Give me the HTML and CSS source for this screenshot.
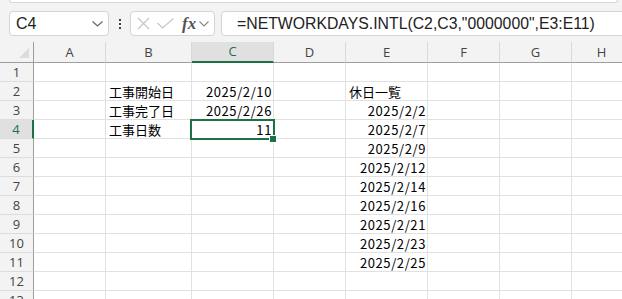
FILE: index.html
```html
<!DOCTYPE html>
<html lang="ja">
<head>
    <meta charset="UTF-8">
    <title>NETWORKDAYS.INTL</title>
    <link rel="stylesheet" href="styles.css">
</head>
<body>
<div id="app">
    <div class="ribbon"></div>
    <div class="toolbar">
        <div class="nameBox">
            <span>C4</span>
            <svg class="chev" width="11" height="6" viewBox="0 0 11 6"><path d="M0.5 0.5 L5.5 5 L10.5 0.5" fill="none" stroke="#666" stroke-width="1.2"/></svg>
        </div>
        <div class="dots"><i></i><i></i><i></i></div>
        <div class="fxBox">
            <svg width="13" height="13" viewBox="0 0 13 13"><path d="M1 1 L12 12 M12 1 L1 12" stroke="#c6c6c6" stroke-width="1.2"/></svg>
            <svg width="17" height="11" viewBox="0 0 17 11"><path d="M0.5 5 L5.5 10 L16.5 0.5" fill="none" stroke="#c6c6c6" stroke-width="1.2"/></svg>
            <span class="fx">fx</span>
            <svg width="10" height="6" viewBox="0 0 10 6"><path d="M0.5 0.5 L5 5 L9.5 0.5" fill="none" stroke="#888" stroke-width="1.1"/></svg>
        </div>
        <div class="formula">=NETWORKDAYS.INTL(C2,C3,"0000000",E3:E11)</div>
    </div>
    <div class="sheet" id="sheet"></div>
</div>
<script>
    // 行ごとのセル内容: [B, C, E]
    var data=[
        ['','',''],
        ['工事開始日','2025/2/10','休日一覧'],
        ['工事完了日','2025/2/26','2025/2/2'],
        ['工事日数','11','2025/2/7'],
        ['','','2025/2/9'],
        ['','','2025/2/12'],
        ['','','2025/2/14'],
        ['','','2025/2/16'],
        ['','','2025/2/21'],
        ['','','2025/2/23'],
        ['','','2025/2/25'],
        ['','',''],
        ['','','']
    ];
    var cols=['A','B','C','D','E','F','G','H'];
    var oSheet=document.getElementById('sheet');
    var str='<div class="corner"><b></b></div>';
    for(var i=0; i<cols.length; i++){
        str+='<div class="colHead'+(cols[i]=='C'?' sel':'')+'">'+cols[i]+'</div>';
    }
    for(var r=0; r<data.length; r++){
        var row=r+1;
        str+='<div class="rowHead'+(row==4?' sel':'')+'">'+row+'</div>';
        str+='<div class="cell"></div>';
        str+='<div class="cell">'+data[r][0]+'</div>';
        str+='<div class="cell num'+(row==4?' active':'')+'">'+data[r][1]+'</div>';
        str+='<div class="cell"></div>';
        //E列: 見出し以外は右寄せ
        str+='<div class="cell'+(row>2?' num':'')+'">'+data[r][2]+'</div>';
        str+='<div class="cell"></div><div class="cell"></div><div class="cell"></div>';
    }
    oSheet.innerHTML=str;
</script>
</body>
</html>
```

FILE: styles.css
```css
*{
    margin:0;
    padding:0;
    box-sizing: border-box;
}
body,html{
    width:622px;
    height:299px;
    overflow: hidden;
    background: #f3f3f3;
}
.ribbon{
    height:3px;
    margin:0 4px 0 9px;
    background: #fff;
    border:1px solid #d6d6d6;
    border-top:0;
    border-radius:0 0 6px 6px;
}
.toolbar{
    height:39px;
    padding:8px 0 0 9px;
    display: flex;
    align-items: flex-start;
}
.nameBox{
    width:100px;
    height:25px;
    background: #fff;
    border:1px solid #d4d4d4;
    border-radius:4px;
    display: flex;
    align-items: center;
    justify-content: space-between;
    padding:0 5px 0 6px;
    font-family: "Liberation Sans", Arial, sans-serif;
    font-size:16px;
    color: #222;
}
.dots{
    width:21px;
    height:25px;
    display: flex;
    flex-direction: column;
    align-items: center;
    justify-content: center;
    gap:2px;
}
.dots i{
    display: block;
    width:2px;
    height:2px;
    background: #444;
}
.fxBox{
    width:85px;
    height:25px;
    background: #fff;
    border:1px solid #d4d4d4;
    border-radius:4px;
    display: flex;
    align-items: center;
    padding:0 0 0 6px;
    gap:7px;
}
.fxBox .fx{
    font-family: "Liberation Serif", "Times New Roman", serif;
    font-style: italic;
    font-weight: bold;
    font-size:17px;
    color: #555;
    margin-left:1px;
    margin-right:-4px;
}
.formula{
    flex:1;
    height:25px;
    margin-left:6px;
    margin-right:-6px;
    background: #fff;
    border:1px solid #d4d4d4;
    border-radius:4px;
    padding-left:15px;
    font-family: "Liberation Sans", Arial, sans-serif;
    font-size:15.8px;
    line-height:23px;
    color: #222;
    white-space: nowrap;
}
.sheet{
    display: grid;
    grid-template-columns: 34px 72px 86px 82px 72px 82px 72px 72px 60px;
    grid-template-rows: 21px;
    grid-auto-rows: 19px;
    background: #fff;
}
.corner{
    background: #f3f3f3;
    border-right:1px solid #9e9e9e;
    border-bottom:1px solid #9e9e9e;
    position: relative;
}
.corner b{
    position: absolute;
    right:4px;
    bottom:4px;
    width:0;
    height:0;
    border-left:10px solid transparent;
    border-bottom:10px solid #dcdcdc;
}
.colHead{
    background: #f3f3f3;
    border-right:1px solid #d9d9d9;
    border-bottom:1px solid #9e9e9e;
    text-align: center;
    font-family: "Open Sans", "Liberation Sans", sans-serif;
    font-size:13px;
    line-height:20px;
    color: #444;
}
.colHead.sel{
    background: #e0e0e0;
    color: #1e7145;
    border-bottom:2px solid #1e7145;
    line-height:19px;
}
.rowHead{
    background: #f3f3f3;
    border-right:1px solid #9e9e9e;
    border-bottom:1px solid #dcdcdc;
    text-align: center;
    font-family: "Open Sans", "Liberation Sans", sans-serif;
    font-size:13px;
    line-height:19px;
    color: #444;
}
.rowHead.sel{
    background: #e0e0e0;
    color: #1e7145;
    border-right:2px solid #1e7145;
}
.cell{
    border-right:1px solid #e1e1e1;
    border-bottom:1px solid #e1e1e1;
    padding:0 2px 0 3px;
    font-family: "Noto Sans CJK JP", "Noto Sans", sans-serif;
    font-size:13px;
    line-height:19px;
    color: #000;
    white-space: nowrap;
    overflow: visible;
}
.cell.num{
    text-align: right;
    letter-spacing:0.6px;
    padding-right:1px;
}
.cell.active{
    position: relative;
}
.cell.active:after{
    content: '';
    position: absolute;
    left:-2px;
    top:-1px;
    right:-2px;
    bottom:-2px;
    border:2px solid #1e7145;
}
.cell.active:before{
    content: '';
    position: absolute;
    right:-4px;
    bottom:-5px;
    width:6px;
    height:6px;
    background: #1e7145;
    border:1px solid #fff;
    z-index:2;
}
```
